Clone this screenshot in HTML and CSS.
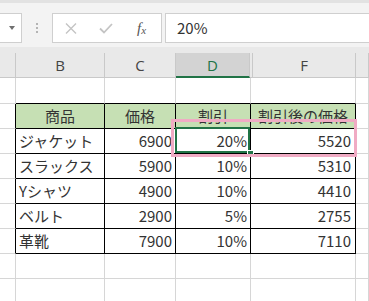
FILE: index.html
```html
<!DOCTYPE html>
<html lang="ja">
<head>
<meta charset="utf-8">
<link rel="stylesheet" href="styles.css">
</head>
<body>
<div class="app">
  <div class="fbar">
    <div class="namebox"><span class="caret"></span></div>
    <div class="grip"><i></i><i></i><i></i></div>
    <div class="fbtns">
      <svg class="ico-x" width="12" height="11" viewBox="0 0 12 11"><path d="M1 0.5 L11 10.5 M11 0.5 L1 10.5" stroke="#c4c4c4" stroke-width="1.4" fill="none"/></svg>
      <svg class="ico-ok" width="14" height="11" viewBox="0 0 14 11"><path d="M1 5.5 L5 9.5 L13 1" stroke="#c4c4c4" stroke-width="1.8" fill="none"/></svg>
      <span class="fx">f<sub>x</sub></span>
    </div>
    <div class="finput">20%</div>
  </div>

  <div class="colhead">
    <div class="ch"></div>
    <div class="ch">B</div>
    <div class="ch">C</div>
    <div class="ch sel">D</div>
    <div class="ch"></div>
    <div class="ch">F</div>
    <div class="ch"></div>
  </div>

  <div class="sheet">
    <div class="row r1">
      <div class="c"></div><div class="c tt"></div><div class="c tt"></div><div class="c tt"></div><div class="c tt"></div><div class="c"></div>
    </div>
    <div class="row">
      <div class="c tl"></div><div class="c t hd">商品</div><div class="c t hd">価格</div><div class="c t hd">割引</div><div class="c t hd">割引後の価格</div><div class="c"></div>
    </div>
    <div class="row">
      <div class="c tl"></div><div class="c t">ジャケット</div><div class="c t n">6900</div><div class="c t n active">20%</div><div class="c t n">5520</div><div class="c"></div>
    </div>
    <div class="row">
      <div class="c tl"></div><div class="c t">スラックス</div><div class="c t n">5900</div><div class="c t n">10%</div><div class="c t n">5310</div><div class="c"></div>
    </div>
    <div class="row">
      <div class="c tl"></div><div class="c t">Yシャツ</div><div class="c t n">4900</div><div class="c t n">10%</div><div class="c t n">4410</div><div class="c"></div>
    </div>
    <div class="row">
      <div class="c tl"></div><div class="c t">ベルト</div><div class="c t n">2900</div><div class="c t n">5%</div><div class="c t n">2755</div><div class="c"></div>
    </div>
    <div class="row">
      <div class="c tl"></div><div class="c t">革靴</div><div class="c t n">7900</div><div class="c t n">10%</div><div class="c t n">7110</div><div class="c"></div>
    </div>
    <div class="row">
      <div class="c"></div><div class="c"></div><div class="c"></div><div class="c"></div><div class="c"></div><div class="c"></div>
    </div>
    <div class="row">
      <div class="c"></div><div class="c"></div><div class="c"></div><div class="c"></div><div class="c"></div><div class="c"></div>
    </div>
  </div>

  <div class="mark"></div>
</div>
</body>
</html>
```

FILE: styles.css
```css
html, body {
  margin: 0;
  padding: 0;
  background: #ffffff;
}
body {
  width: 369px;
  height: 301px;
  overflow: hidden;
}
.app {
  position: relative;
  width: 369px;
  height: 301px;
  overflow: hidden;
  font-family: "Noto Sans CJK JP", "Noto Sans", sans-serif;
}

/* formula bar */
.fbar {
  box-sizing: border-box;
  height: 47px;
  padding-top: 10px;
  border-top: 3px solid #e2e2e2;
  background: #f3f3f3;
  display: flex;
  align-items: flex-start;
}
.namebox {
  box-sizing: border-box;
  width: 23px;
  height: 30px;
  margin-left: -1px;
  background: #fff;
  border: 1px solid #cfcfcf;
  display: flex;
  align-items: center;
  justify-content: center;
  padding-left: 2px;
}
.caret {
  width: 0;
  height: 0;
  border-left: 3.5px solid transparent;
  border-right: 3.5px solid transparent;
  border-top: 4px solid #6f6f6f;
}
.grip {
  width: 30px;
  height: 30px;
  display: flex;
  flex-direction: column;
  align-items: center;
  justify-content: center;
  gap: 2px;
}
.grip i {
  display: block;
  width: 2px;
  height: 2px;
  background: #b4b4b4;
}
.fbtns {
  box-sizing: border-box;
  width: 110px;
  height: 30px;
  background: #fff;
  border: 1px solid #cfcfcf;
  display: flex;
  align-items: center;
  padding-left: 12px;
}
.ico-ok {
  margin-left: 22px;
}
.fx {
  margin-left: 24px;
  font-family: "Liberation Serif", serif;
  font-style: italic;
  font-size: 15px;
  color: #555;
  line-height: 1;
}
.fx sub {
  font-size: 11px;
  vertical-align: -1px;
}
.finput {
  box-sizing: border-box;
  flex: 1;
  height: 30px;
  margin-left: 3px;
  margin-right: -2px;
  background: #fff;
  border: 1px solid #cfcfcf;
  padding-left: 11px;
  font-size: 15px;
  line-height: 27px;
  color: #333;
}

/* column headers */
.colhead {
  box-sizing: border-box;
  height: 31px;
  padding-top: 6px;
  background: #e9e9e9;
  display: grid;
  grid-template-columns: 16px 89px 71px 74px 3px 103px 1fr;
}
.ch {
  box-sizing: border-box;
  height: 25px;
  border-right: 1px solid #c9c9c9;
  border-bottom: 1px solid #c9c9c9;
  font-family: "Open Sans", "Noto Sans", sans-serif;
  font-size: 15px;
  color: #444;
  display: flex;
  align-items: center;
  justify-content: center;
}
.ch.sel {
  background: #d3d3d3;
  color: #217346;
  border-bottom: 2px solid #217346;
}

/* grid */
.row {
  display: grid;
  grid-template-columns: 16px 89px 71px 75px 105px 1fr;
  height: 25px;
}
.row.r1 {
  height: 26px;
}
.c {
  box-sizing: border-box;
  border-right: 1px solid #d6d6d6;
  border-bottom: 1px solid #d6d6d6;
  font-size: 15px;
  color: #333;
  padding: 0 3px;
  line-height: 23px;
  white-space: nowrap;
  overflow: visible;
}
.c.tt {
  border-bottom-color: #000;
}
.c.tl {
  border-right-color: #000;
}
.c.t {
  border-right-color: #000;
  border-bottom-color: #000;
}
.c.hd {
  background: #c6e0b4;
  text-align: center;
}
.c.n {
  text-align: right;
  padding-right: 3px;
}
.row .c:nth-child(5).n {
  padding-right: 4px;
}
.c.active {
  position: relative;
}
.c.active::before {
  content: "";
  position: absolute;
  left: -1px;
  top: -2px;
  right: 0;
  bottom: 0;
  border: 2px solid #217346;
}
.c.active::after {
  content: "";
  position: absolute;
  right: -3px;
  bottom: -3px;
  width: 5px;
  height: 5px;
  background: #217346;
  box-shadow: 0 0 0 1px #fff;
}

/* pink annotation */
.mark {
  position: absolute;
  left: 171px;
  top: 119px;
  width: 186px;
  height: 38px;
  box-sizing: border-box;
  border: 3px solid #f0abc4;
}
```
